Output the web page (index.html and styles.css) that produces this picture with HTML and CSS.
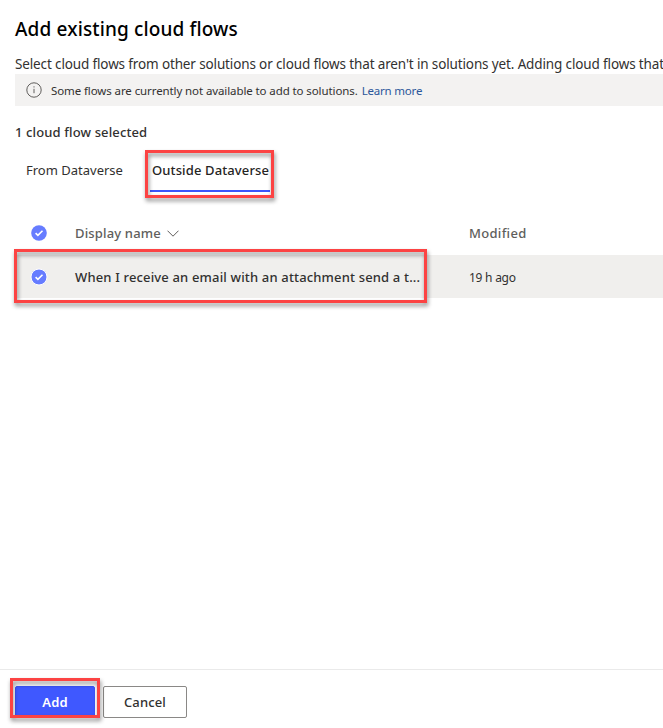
FILE: index.html
```html
<!DOCTYPE html>
<html lang="en">
<head>
<meta charset="utf-8">
<title>Add existing cloud flows</title>
<link rel="stylesheet" href="styles.css">
</head>
<body>
<main class="panel">
  <h1 class="title"><span>Add existing cloud flows</span></h1>
  <p class="description">Select cloud flows from other solutions or cloud flows that aren't in solutions yet. Adding cloud flows that</p>
  <div class="banner">
    <svg class="info" viewBox="0 0 16 16"><circle cx="8" cy="8" r="7.2"/><path d="M8 6.8v4.4M8 4.3v1.2"/></svg>
    <span class="banner-text">Some flows are currently not available to add to solutions.</span>
    <a class="link">Learn more</a>
  </div>
  <p class="count">1 cloud flow selected</p>
  <nav class="tabs">
    <div class="tab"><span class="tab-from">From Dataverse</span></div>
    <div class="tab active"><span class="tab-outside">Outside Dataverse</span><i class="mark mark-tab"></i></div>
  </nav>
  <section class="grid">
    <div class="row head">
      <svg class="check" viewBox="0 0 16 16"><circle cx="8" cy="8" r="7.8"/><path d="M4.6 8.1l2.3 2.3 4.6-4.6"/></svg>
      <div class="name"><span class="head-name">Display name</span><svg class="chevron" viewBox="0 0 12 7"><path d="M.5.7L6 6.2 11.5.7"/></svg></div>
      <div class="modified"><span class="head-mod">Modified</span></div>
    </div>
    <div class="row item">
      <svg class="check ring" viewBox="0 0 16 16"><circle cx="8" cy="8" r="8"/><path d="M4.6 8.1l2.3 2.3 4.6-4.6"/></svg>
      <div class="name"><span class="item-name">When I receive an email with an attachment send a t...</span></div>
      <div class="modified"><span class="item-mod">19 h ago</span></div>
      <i class="mark mark-row"></i>
    </div>
  </section>
  <footer class="footer">
    <div class="add-wrap"><button class="btn primary">Add</button><i class="mark mark-add"></i></div>
    <button class="btn"><span class="cancel">Cancel</span></button>
  </footer>
</main>
</body>
</html>
```
FILE: styles.css
```css
* { box-sizing: border-box; }
body {
  margin: 0;
  background: #fff;
  color: #323130;
  font-family: "Noto Sans", "Open Sans", sans-serif;
  font-size: 13px;
  overflow: hidden;
}
h1, p { margin: 0; }
.panel {
  height: 728px;
  padding-left: 15px;
  display: flex;
  flex-direction: column;
  white-space: nowrap;
  overflow: hidden;
}
.title {
  margin-top: 15px;
  height: 28px;
  line-height: 28px;
  font-size: 19px;
  font-weight: 500;
  letter-spacing: .14px;
  color: #000;
}
.description {
  margin-top: 11px;
  height: 20px;
  line-height: 20px;
  font-size: 13.5px;
  letter-spacing: -.135px;
}
.banner {
  height: 32px;
  padding-left: 11px;
  display: flex;
  align-items: center;
  background: #f3f2f1;
  font-size: 11.5px;
  letter-spacing: -.1px;
}
.info { width: 16px; height: 16px; margin: -1px 9px 0 0; fill: none; stroke: #605e5c; }
.banner-text { margin-right: 4px; padding-top: 1px; }
.link { padding-top: 1px; color: #2b579a; letter-spacing: -.2px; }
.count {
  margin-top: 16px;
  height: 20px;
  line-height: 20px;
  font-weight: 500;
  letter-spacing: .13px;
}
.tabs { display: flex; margin-top: 6px; height: 44px; line-height: 44px; }
.tab { width: 120px; padding-left: 11px; }
.tab.active {
  position: relative;
  margin-left: 15px;
  padding-left: 2px;
  height: 44px;
  border-bottom: 2px solid #3b55fb;
  color: #252423;
  font-weight: 500;
  letter-spacing: .12px;
}
.grid { margin-top: 19px; }
.row { display: flex; align-items: center; height: 43px; }
.row.head { height: 44px; color: #605e5c; }
.row.item { position: relative; background: #f0efed; }
.check { width: 16px; height: 16px; margin-left: 16px; fill: #667cff; overflow: visible; }
.check path { fill: none; stroke: #fff; stroke-width: 1.6; }
.check.ring circle { stroke: #fff; stroke-width: 1; }
.name { width: 394px; margin-left: 28px; display: flex; align-items: center; font-weight: 500; letter-spacing: .16px; }
.item .name { color: #323130; }
.chevron { width: 12px; height: 7px; margin-left: 6px; fill: none; stroke: #605e5c; }
.head-mod { font-weight: 500; letter-spacing: .3px; }
.item-mod { font-size: 12px; letter-spacing: -.25px; }
.footer {
  margin: auto 0 0 -15px;
  height: 59px;
  padding: 16px 0 0 15px;
  border-top: 1px solid #eaeaea;
  display: flex;
  gap: 8px;
}
.add-wrap { position: relative; width: 80px; height: 32px; }
.btn {
  width: 84px;
  height: 32px;
  padding: 0;
  border: 1px solid #8a8886;
  border-radius: 2px;
  background: #fff;
  color: #323130;
  font: 500 13px/30px "Noto Sans", "Open Sans", sans-serif;
  letter-spacing: .15px;
}
.btn.primary { width: 80px; border-color: #3b55fb; background: #3f58ff; color: #fff; font-weight: 600; }
.mark {
  position: absolute;
  border: 3px solid #fc4343;
  filter: drop-shadow(1px 3px 2px rgba(0, 0, 0, .45));
}
.mark-tab { left: -5px; top: 2px; width: 129px; height: 48px; }
.mark-row { left: -1px; top: -6px; width: 413px; height: 54px; }
.mark-add { left: -5px; top: -8px; width: 90px; height: 40px; }
```
